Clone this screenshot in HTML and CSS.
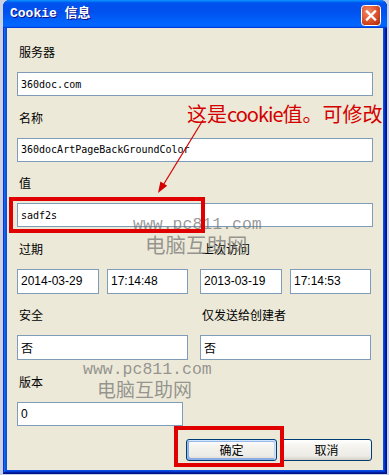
FILE: index.html
```html
<!DOCTYPE html>
<html lang="zh-CN">
<head>
<meta charset="utf-8">
<title>Cookie 信息</title>
<link rel="stylesheet" href="styles.css">
</head>
<body>
<div class="screen">
  <div class="window">
    <div class="titlebar">
      <span class="title">Cookie 信息</span>
      <span class="close">
        <svg width="20" height="21" viewBox="0 0 20 21">
          <defs>
            <radialGradient id="cg" cx="35%" cy="30%" r="80%">
              <stop offset="0" stop-color="#f08a6a"/>
              <stop offset="0.55" stop-color="#e0552f"/>
              <stop offset="1" stop-color="#b8330f"/>
            </radialGradient>
          </defs>
          <rect x="0.5" y="0.5" width="19" height="20" rx="3" fill="url(#cg)" stroke="#ffffff"/>
          <path d="M6 6.5 L14 14.5 M14 6.5 L6 14.5" stroke="#ffffff" stroke-width="2.4" stroke-linecap="square"/>
        </svg>
      </span>
    </div>
    <div class="client">
      <div class="field">
        <div class="label">服务器</div>
        <div class="input wide mono">360doc.com</div>
      </div>
      <div class="field">
        <div class="label">名称</div>
        <div class="input wide mono">360docArtPageBackGroundColor</div>
      </div>
      <div class="field">
        <div class="label">值</div>
        <div class="input wide mono">sadf2s</div>
      </div>
      <div class="cols">
        <div class="field">
          <div class="label">过期</div>
          <div class="pair">
            <div class="input tall date">2014-03-29</div>
            <div class="input tall time">17:14:48</div>
          </div>
        </div>
        <div class="field">
          <div class="label">上次访问</div>
          <div class="pair">
            <div class="input tall date">2013-03-19</div>
            <div class="input tall time">17:14:53</div>
          </div>
        </div>
      </div>
      <div class="cols">
        <div class="field">
          <div class="label">安全</div>
          <div class="input tall half">否</div>
        </div>
        <div class="field">
          <div class="label">仅发送给创建者</div>
          <div class="input tall half">否</div>
        </div>
      </div>
      <div class="field">
        <div class="label">版本</div>
        <div class="input version num">0</div>
      </div>
      <div class="buttons">
        <button class="btn focused">确定</button>
        <button class="btn">取消</button>
      </div>
    </div>
  </div>

  <div class="watermark wm1">
    <div class="wm-url">www.pc811.com</div>
    <div class="wm-name">电脑互助网</div>
  </div>
  <div class="watermark wm2">
    <div class="wm-url">www.pc811.com</div>
    <div class="wm-name">电脑互助网</div>
  </div>

  <div class="note">这是<span class="latin">cookie</span>值。可修改</div>
  <svg class="arrow" width="389" height="475" viewBox="0 0 389 475">
    <line x1="203" y1="120" x2="162" y2="187" stroke="#d40000" stroke-width="1.2"/>
    <polygon points="158,193 167.2,185.7 160.4,181.5" fill="#d40000"/>
  </svg>
  <div class="redbox box-value"></div>
  <div class="redbox box-ok"></div>
</div>
</body>
</html>
```

FILE: styles.css
```css
* { box-sizing: border-box; }

html, body {
  margin: 0;
  padding: 0;
  background: #c9d1e2;
}

.screen {
  position: relative;
  width: 389px;
  height: 475px;
  overflow: hidden;
}

.window {
  margin-left: 3px;
  width: 384px;
  height: 474px;
  display: flex;
  flex-direction: column;
  background: #0a4ee0;
  border-radius: 7px 7px 0 0;
  box-shadow: inset -1px -1px #00138c, inset 1px 0 #0831d9, inset -2px -2px #001ea0, inset 2px 0 #166aee, inset -3px -3px #003bda, inset 3px 0 #0855dd;
}

.titlebar {
  height: 28px;
  flex: none;
  display: flex;
  align-items: flex-start;
  justify-content: space-between;
  padding: 0 6px 0 7px;
  border-radius: 7px 7px 0 0;
  background: linear-gradient(180deg, #0997ff 0, #0053ee 10%, #0050ee 40%, #0066ff 86%, #0066ff 92%, #005bff 95%, #003dd7 97%, #003dd7 100%);
}

.title {
  margin-top: 6px;
  color: #ffffff;
  font-family: "Liberation Mono", "Noto Sans CJK SC", monospace;
  font-size: 13px;
  font-weight: bold;
  line-height: 16px;
  text-shadow: 1px 1px #0f1089;
}

.close {
  margin-top: 5px;
  width: 20px;
  height: 21px;
  display: block;
}
.close svg { display: block; }

.client {
  flex: 1;
  margin: 0 4px 4px 4px;
  background: #ece9d8;
  padding: 16px 10px 0 10px;
  display: flex;
  flex-direction: column;
  gap: 13.5px;
  font-family: "Noto Sans CJK SC", "Liberation Sans", sans-serif;
  font-size: 12px;
  color: #000;
}

.field {
  display: flex;
  flex-direction: column;
  gap: 12px;
}

.label {
  height: 16px;
  line-height: 16px;
  padding-left: 2px;
  font-size: 12px;
  white-space: nowrap;
}

.input {
  height: 24px;
  background: #ffffff;
  border: 1px solid #7f9db9;
  display: flex;
  align-items: center;
  padding-left: 3px;
  font-size: 12px;
  white-space: nowrap;
  overflow: hidden;
}
.input.tall { height: 25px; }
.input.wide { width: 356px; }
.input.half { width: 171px; }
.input.version { width: 166px; }
.input.date { width: 82px; }
.input.time { width: 81px; }

.mono {
  font-family: "DejaVu Sans Mono", monospace;
  font-size: 10px;
}
.date, .time, .num {
  font-family: "Liberation Sans", sans-serif;
  font-size: 12px;
}

.cols {
  display: grid;
  grid-template-columns: 171px 173px;
  column-gap: 12px;
}

.pair {
  display: flex;
  gap: 8px;
}

.buttons {
  margin-top: -0.5px;
  display: flex;
  justify-content: flex-end;
  gap: 4px;
  padding-right: 1px;
}

.btn {
  width: 91px;
  height: 22px;
  padding: 0;
  border: 1px solid #003c74;
  border-radius: 3px;
  background: linear-gradient(180deg, #ffffff 0, #f5f4ef 30%, #ecebe6 80%, #d6d0c5 100%);
  font-family: "Noto Sans CJK SC", sans-serif;
  font-size: 12px;
  color: #000;
  line-height: 20px;
}
.btn.focused {
  box-shadow: inset -1px 1px #cee7ff, inset 1px 2px #98b8ea, inset -2px 2px #bcd4f6, inset 1px -1px #89ade4, inset 2px -2px #89ade4;
}

.watermark {
  position: absolute;
  color: rgba(110, 110, 110, 0.7);
  pointer-events: none;
  white-space: nowrap;
}
.wm-url {
  font-family: "Liberation Mono", monospace;
  font-size: 16.5px;
  line-height: 16px;
}
.wm-name {
  font-family: "Noto Sans CJK SC", sans-serif;
  line-height: 22px;
}
.wm1 { left: 133px; top: 217px; }
.wm1 .wm-name { font-size: 20.5px; margin-left: 12px; margin-top: 0; }
.wm2 { left: 83px; top: 362px; }
.wm2 .wm-name { font-size: 19px; margin-left: 14px; margin-top: 0; }

.note {
  position: absolute;
  left: 187px;
  top: 101px;
  font-family: "Noto Sans CJK SC", sans-serif;
  font-size: 20px;
  line-height: 26px;
  color: #d40000;
  white-space: nowrap;
}
.note .latin { letter-spacing: -1px; }

.arrow {
  position: absolute;
  left: 0;
  top: 0;
  pointer-events: none;
}

.redbox {
  position: absolute;
  border: 4px solid #e00000;
  pointer-events: none;
}
.box-value { left: 9px; top: 197px; width: 196px; height: 36px; }
.box-ok { left: 174px; top: 426px; width: 110px; height: 41px; }
```
